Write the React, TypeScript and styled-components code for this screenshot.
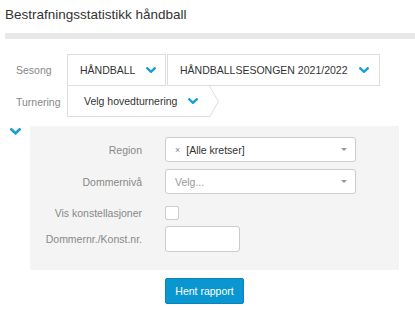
import styled, { createGlobalStyle } from "styled-components";

const GlobalStyle = createGlobalStyle`
  body {
    margin: 0;
    background: #fff;
    font-family: "Liberation Sans", Arial, sans-serif;
    color: #333;
  }
`;

const Page = styled.div`
  width: 415px;
  padding-top: 6px;
`;

const Title = styled.h1`
  margin: 0 0 0 5px;
  font-size: 13.5px;
  font-weight: normal;
  line-height: 17px;
  color: #333;
`;

const Divider = styled.div`
  margin: 10px 0 0 5px;
  height: 6px;
  background: #e8e8e8;
`;

const Filters = styled.div`
  display: flex;
  flex-direction: column;
  margin-top: 15px;
  padding-left: 16px;
`;

const FilterRow = styled.div`
  display: flex;
  align-items: center;
`;

const FilterLabel = styled.span`
  width: 51px;
  font-size: 10.5px;
  color: #888;
`;

const Crumb = styled.div<{ $width: number; $pad: number; $arrow?: boolean }>`
  position: relative;
  box-sizing: border-box;
  display: flex;
  align-items: center;
  gap: 11px;
  white-space: nowrap;
  width: ${(p) => p.$width}px;
  height: ${(p) => (p.$arrow ? 31 : 32)}px;
  padding-left: ${(p) => p.$pad}px;
  border: 1px solid #ddd;
  border-right: ${(p) => (p.$arrow ? "none" : "1px solid #ddd")};
  border-top: ${(p) => (p.$arrow ? "none" : "1px solid #ddd")};
  margin-right: 1px;
  font-size: 10.5px;
  color: #333;
  background: #fff;
`;

const CrumbTip = styled.svg`
  position: absolute;
  right: -10px;
  top: 0;
`;

const Chevron = ({ size = 10 }: { size?: number }) => (
  <svg width={size} height={size * 0.65} viewBox="0 0 10 6.5">
    <polyline
      points="1.3,1.3 5,4.8 8.7,1.3"
      fill="none"
      stroke="#1a9ddb"
      strokeWidth="2.4"
      strokeLinecap="square"
    />
  </svg>
);

const Body = styled.div`
  display: flex;
  align-items: flex-start;
  margin-top: 9px;
`;

const Toggle = styled.div`
  width: 30px;
  padding: 2px 0 0 10px;
  box-sizing: border-box;
  line-height: 0;
`;

const Panel = styled.div`
  width: 369px;
  background: #f4f4f4;
  padding: 11px 0 18px;
  display: grid;
  grid-template-columns: 112px 191px;
  column-gap: 23px;
  align-items: center;
`;

const FieldLabel = styled.label<{ $gap: number }>`
  text-align: right;
  font-size: 10.5px;
  color: #888;
  margin-top: ${(p) => p.$gap}px;
`;

const FieldCell = styled.div<{ $gap: number }>`
  margin-top: ${(p) => p.$gap}px;
  display: flex;
`;

const Select = styled.div`
  box-sizing: border-box;
  width: 191px;
  height: 25px;
  display: flex;
  align-items: center;
  padding: 0 8px 0 9px;
  border: 1px solid #ccc;
  border-radius: 3px;
  background: #fff;
  font-size: 10.5px;
`;

const Clear = styled.span`
  font-size: 9px;
  color: #888;
  margin-right: 6px;
`;

const Value = styled.span<{ $placeholder?: boolean }>`
  flex: 1;
  color: ${(p) => (p.$placeholder ? "#999" : "#333")};
`;

const Caret = styled.span`
  width: 0;
  height: 0;
  border-left: 3px solid transparent;
  border-right: 3px solid transparent;
  border-top: 3px solid #999;
`;

const Checkbox = styled.span`
  box-sizing: border-box;
  width: 14px;
  height: 14px;
  border: 1px solid #ccc;
  border-radius: 2px;
  background: #fff;
`;

const TextInput = styled.input`
  box-sizing: border-box;
  width: 75px;
  height: 26px;
  border: 1px solid #ccc;
  border-radius: 3px;
  background: #fff;
  padding: 0 6px;
`;

const Actions = styled.div`
  display: flex;
  padding: 8px 0 0 165px;
`;

const Button = styled.button`
  box-sizing: border-box;
  width: 79px;
  height: 26px;
  background: #0a96d0;
  border: 1px solid #0884ba;
  border-radius: 2px;
  color: #fff;
  font-family: "Liberation Sans", Arial, sans-serif;
  font-size: 10.5px;
  padding: 0;
`;

export default function App() {
  return (
    <Page>
      <GlobalStyle />
      <Title>Bestrafningsstatistikk håndball</Title>
      <Divider />
      <Filters>
        <FilterRow>
          <FilterLabel>Sesong</FilterLabel>
          <Crumb $width={99} $pad={12}>
            HÅNDBALL <Chevron />
          </Crumb>
          <Crumb $width={213} $pad={12}>
            HÅNDBALLSESONGEN 2021/2022 <Chevron />
          </Crumb>
        </FilterRow>
        <FilterRow>
          <FilterLabel>Turnering</FilterLabel>
          <Crumb $width={143} $pad={16} $arrow>
            Velg hovedturnering <Chevron />
            <CrumbTip width="11" height="31" viewBox="0 0 11 31">
              <polyline
                points="0.5,0 9.5,15.5 0.5,31"
                fill="#fff"
                stroke="#ddd"
                strokeWidth="1"
              />
            </CrumbTip>
          </Crumb>
        </FilterRow>
      </Filters>
      <Body>
        <Toggle>
          <Chevron size={11} />
        </Toggle>
        <Panel>
          <FieldLabel $gap={0}>Region</FieldLabel>
          <FieldCell $gap={0}>
            <Select>
              <Clear>×</Clear>
              <Value>[Alle kretser]</Value>
              <Caret />
            </Select>
          </FieldCell>
          <FieldLabel $gap={7}>Dommernivå</FieldLabel>
          <FieldCell $gap={7}>
            <Select>
              <Value $placeholder>Velg...</Value>
              <Caret />
            </Select>
          </FieldCell>
          <FieldLabel $gap={12}>Vis konstellasjoner</FieldLabel>
          <FieldCell $gap={12}>
            <Checkbox />
          </FieldCell>
          <FieldLabel $gap={6}>Dommernr./Konst.nr.</FieldLabel>
          <FieldCell $gap={6}>
            <TextInput />
          </FieldCell>
        </Panel>
      </Body>
      <Actions>
        <Button>Hent rapport</Button>
      </Actions>
    </Page>
  );
}
